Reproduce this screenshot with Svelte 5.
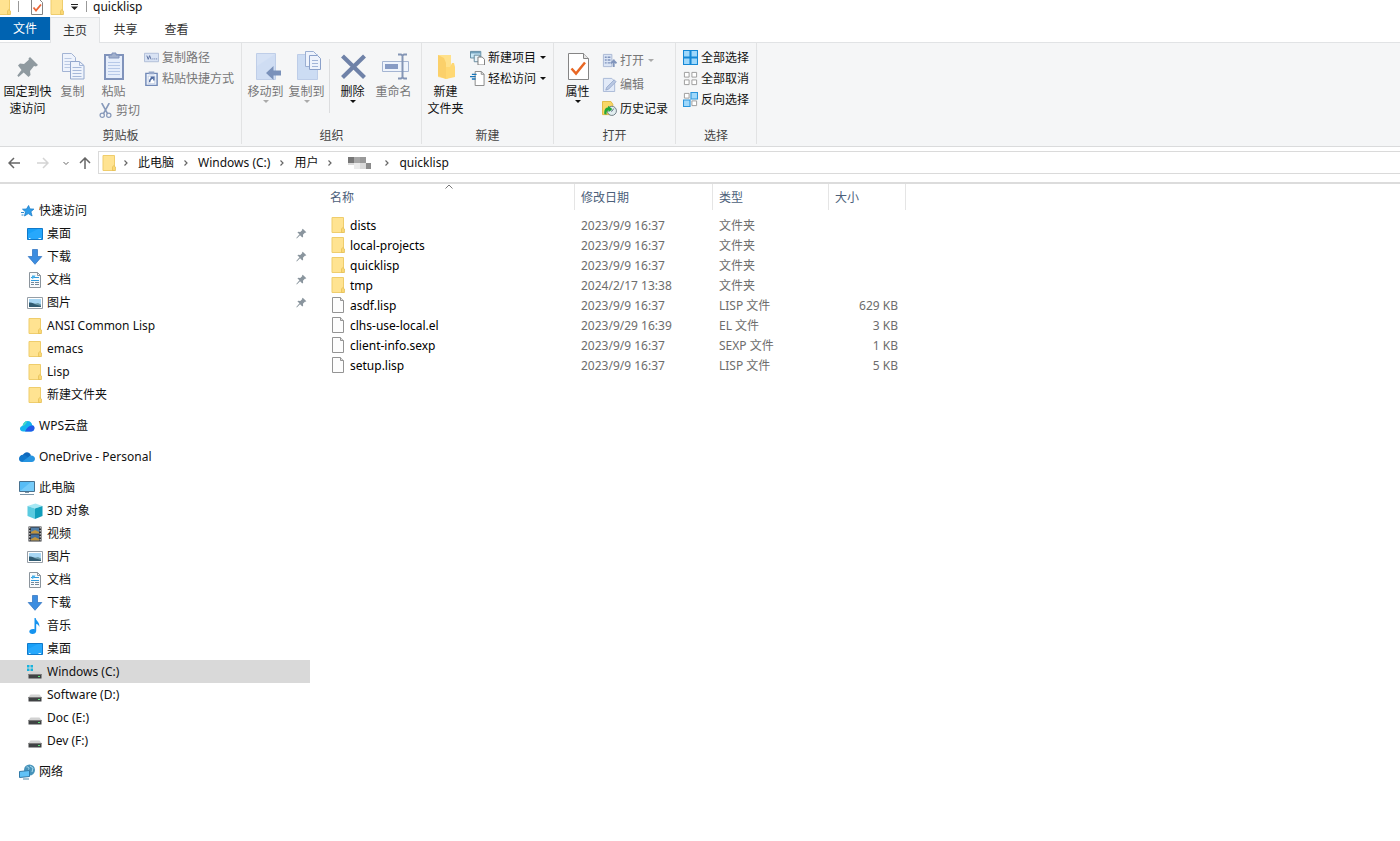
<script lang="ts">
  type NavItem = { id: string; label: string; icon: string; pinned?: boolean };
  type NavGroup = { root: NavItem; items: NavItem[] };
  type FileRow = { name: string; date: string; type: string; size: string; icon: string };

  const tabs = ['主页', '共享', '查看'];

  const crumbs = ['此电脑', 'Windows (C:)', '用户', '', 'quicklisp'];

  const nav: NavGroup[] = [
    {
      root: { id: 'quick', label: '快速访问', icon: 'star' },
      items: [
        { id: 'q-desktop', label: '桌面', icon: 'desktop', pinned: true },
        { id: 'q-download', label: '下载', icon: 'download', pinned: true },
        { id: 'q-docs', label: '文档', icon: 'document', pinned: true },
        { id: 'q-pics', label: '图片', icon: 'picture', pinned: true },
        { id: 'q-ansi', label: 'ANSI Common Lisp', icon: 'folder' },
        { id: 'q-emacs', label: 'emacs', icon: 'folder' },
        { id: 'q-lisp', label: 'Lisp', icon: 'folder' },
        { id: 'q-new', label: '新建文件夹', icon: 'folder' },
      ],
    },
    { root: { id: 'wps', label: 'WPS云盘', icon: 'wps' }, items: [] },
    { root: { id: 'onedrive', label: 'OneDrive - Personal', icon: 'onedrive' }, items: [] },
    {
      root: { id: 'pc', label: '此电脑', icon: 'pc' },
      items: [
        { id: 'pc-3d', label: '3D 对象', icon: 'cube' },
        { id: 'pc-video', label: '视频', icon: 'video' },
        { id: 'pc-pics', label: '图片', icon: 'picture' },
        { id: 'pc-docs', label: '文档', icon: 'document' },
        { id: 'pc-download', label: '下载', icon: 'download' },
        { id: 'pc-music', label: '音乐', icon: 'music' },
        { id: 'pc-desktop', label: '桌面', icon: 'desktop' },
        { id: 'c', label: 'Windows (C:)', icon: 'windrive' },
        { id: 'd', label: 'Software (D:)', icon: 'drive' },
        { id: 'e', label: 'Doc (E:)', icon: 'drive' },
        { id: 'f', label: 'Dev (F:)', icon: 'drive' },
      ],
    },
    { root: { id: 'network', label: '网络', icon: 'network' }, items: [] },
  ];

  const files: FileRow[] = [
    { name: 'dists', date: '2023/9/9 16:37', type: '文件夹', size: '', icon: 'folder' },
    { name: 'local-projects', date: '2023/9/9 16:37', type: '文件夹', size: '', icon: 'folder' },
    { name: 'quicklisp', date: '2023/9/9 16:37', type: '文件夹', size: '', icon: 'folder' },
    { name: 'tmp', date: '2024/2/17 13:38', type: '文件夹', size: '', icon: 'folder' },
    { name: 'asdf.lisp', date: '2023/9/9 16:37', type: 'LISP 文件', size: '629 KB', icon: 'file' },
    { name: 'clhs-use-local.el', date: '2023/9/29 16:39', type: 'EL 文件', size: '3 KB', icon: 'file' },
    { name: 'client-info.sexp', date: '2023/9/9 16:37', type: 'SEXP 文件', size: '1 KB', icon: 'file' },
    { name: 'setup.lisp', date: '2023/9/9 16:37', type: 'LISP 文件', size: '5 KB', icon: 'file' },
  ];

  let activeTab = $state('主页');
  let selected = $state('c');
</script>

{#snippet icon(name: string)}
  <svg class="icon" viewBox="0 0 16 16" aria-hidden="true">
    {#if name === 'folder'}
      <path d="M2 .5h11.500v15H2z" fill="#ffe391" stroke="#efcd6c" />
      <path d="M11.500 15.500V12l1.200-1.500L14.500 12v3.500z" fill="#fbd873" stroke="#e3bd54" stroke-width=".7" />
    {:else if name === 'file'}
      <path d="M2.500.5h8l3 3v12h-11z" fill="#fdfdfd" stroke="#949494" />
      <path d="M10.500.5v3h3" fill="#ddd" stroke="#949494" />
    {:else if name === 'star'}
      <path d="m9.600 2.500 1.300 3.400 4 .2-3 2.600 1.200 4.300-3.800-2.400L5.500 13l1-4.200-3-2.600 4-.2z" fill="#2f9de9" stroke="#1d7fca" stroke-width=".8" />
      <path d="M2 9.500h3M2.500 12h2" stroke="#2f8bd0" />
    {:else if name === 'desktop'}
      <path d="M.5 2.500h15v11H.5z" fill="#18a0f8" stroke="#1179c9" />
      <path d="M1 13V8L11 3h4v10z" fill="#36b0ff" opacity=".5" />
      <path d="M2 12.500h1.500m8 0H14" stroke="#d9f1ff" />
    {:else if name === 'download'}
      <path d="M5.500.5h5v7h4.300L8 15.300 1.200 7.500h4.300z" fill="#3c8de0" stroke="#2a6fbe" stroke-width=".7" />
    {:else if name === 'document'}
      <path d="M2.500.5h8l3 3v12h-11z" fill="#f7fafc" stroke="#8b949c" />
      <path d="M10.500.5v3h3" fill="none" stroke="#8b949c" />
      <path d="M4 5.500h8M4 8.500h8" stroke="#2f9bdd" />
      <path d="M5 3.500h3.500L7 6 5 7z" fill="#47aee8" />
      <path d="M4 10.500h3m1 0h4M4 12.500h3m1 0h4" stroke="#72889b" />
    {:else if name === 'picture'}
      <path d="M.5 2.500h15v11H.5z" fill="#fff" stroke="#969ea6" />
      <path d="M2 4h12v8H2z" fill="#a8d7f4" />
      <path d="M2 7.500c3-.5 5 1.500 7 1.500l5 1v2H2z" fill="#315c73" />
      <path d="m7 9 4-1 3 1.500V11z" fill="#6c9baa" />
    {:else if name === 'wps'}
      <path d="M4.500 13.500C1.800 13.500.8 12 1 10.500c.2-1.500 1.200-2.300 2.500-2.500C4 5 6 3 8.600 3c2.700 0 4.300 2 4.600 4.200 1.800.5 2.400 1.800 2.200 3.300-.2 1.800-1.500 3-3.400 3z" fill="#14b4ee" />
      <path d="M6 13.500c2-4.500 5-7 8.500-5.800.8.700 1 1.600.9 2.800-.2 1.800-1.500 3-3.400 3z" fill="#2459e8" />
      <path d="M3.500 8C4 5 6 3 8.600 3 7 5.500 6 8 3.500 8z" fill="#46d9c4" />
    {:else if name === 'onedrive'}
      <path d="M3.500 6.500C5 2.800 10 1.500 12 6.300L8 11z" fill="#0f68bb" />
      <path d="M3.500 13C1 13 0 11.500 0 9.700 0 7.500 2 5.500 4.500 5.800 7 6.100 8 8.500 11 9.500L6 13z" fill="#1177cb" />
      <path d="m3 12.700 8.500-6.200c2.500-.3 4.500 1.300 4.500 3.300 0 1.900-1.300 3.200-3.300 3.200H4z" fill="#2795e1" />
    {:else if name === 'pc'}
      <path d="M.5 1.500h15v10H.5z" fill="#57bdf7" stroke="#48718f" />
      <path d="M1 11 12 2h3v9z" fill="#8ad5fc" opacity=".6" />
      <path d="M6 12.500h4M1 14.500h14" stroke="#7b95a8" />
    {:else if name === 'cube'}
      <path d="m.5 3 8-2.500 7 2.500L8 5.500z" fill="#a6e8f4" />
      <path d="M.5 3 8 5.500V16L.5 13z" fill="#5bcbe0" />
      <path d="M8 5.500 15.500 3v10L8 16z" fill="#119ebb" />
    {:else if name === 'video'}
      <path d="M1.500.500h13v15h-13z" fill="#2f3135" />
      <path d="M4 1.500h8v6H4z" fill="#527fa8" />
      <path d="M4 8.500h8v6H4z" fill="#446f9e" />
      <path d="m4 6 4-2 4 2v1.500H4zm0 7 4-2 4 2v1.500H4z" fill="#c0943e" />
      <path d="M2.800 1v14M13.200 1v14" stroke="#eee" stroke-dasharray="1.500 1.500" />
    {:else if name === 'music'}
      <path d="M7.500 0h1.200c.2 3 4.300 4 3.600 9-.6-2-1.800-2.800-3.100-3v7c0 2-1.800 3-3.700 3S2.300 14.800 2.300 13.500c0-1.700 2.300-2.900 5.200-2.300z" fill="#1593ef" />
    {:else if name === 'drive' || name === 'windrive'}
      {#if name === 'windrive'}
        <path d="M0 1h2.500v2.500H0zm3.500 0H6v2.500H3.500zM0 4.500h2.500V7H0zm3.500 0H6V7H3.500z" fill="#17b3de" />
      {/if}
      <path d="M3.500 7.500h9l2 2.500h-13z" fill="#d2d2d2" />
      <path d="M1.500 10h13v4.500h-13z" fill="#404244" />
      <path d="M1.500 10.500h13" stroke="#777" />
      <path d="M11 12.500h2" stroke="#5be078" />
    {:else if name === 'network'}
      <circle cx="10.500" cy="6" r="5.500" fill="#4793ba" />
      <path d="M7.500 3c2-.5 3 1 2 2.500M11 2l3 2-1 4" fill="none" stroke="#a8daed" />
      <path d="m.5 7.500 10-1v6l-10 1z" fill="#60c2f7" stroke="#317aa8" />
      <path d="M4 15h6" stroke="#5187a7" />
    {:else if name === 'pin'}
      <path d="m9.500 2 4.500 4.500-1.200.7-.7-.2-2.300 2.600.2 2.400-1 1L6.200 10l-4 4-.6-.4L5.500 9 3 6.800l1-1 2.500.2L9 3.700l-.3-.8z" fill="#8a959e" />
    {:else if name === 'check'}
      <path d="M2.500.5h8l3 3v12h-11z" fill="#fff" stroke="#858585" />
      <path d="m4.500 8.500 2.500 3 5-6" fill="none" stroke="#ea6638" stroke-width="1.800" />
    {:else if name === 'path'}
      <path d="M.5 3.500h15v9H.5z" fill="#d9e3f4" stroke="#afbdd8" />
      <path d="m3 6 1.500 4L6 6l1.500 4M9 9.500h1m1 0h1m1 0h1" fill="none" stroke="#5b70a0" />
    {:else if name === 'shortcut'}
      <path d="M2 2.500h12v13H2z" fill="#edf3fc" stroke="#7188b6" stroke-width="1.500" />
      <path d="M5 .5h6v3H5z" fill="#96a7c9" />
      <path d="M4.500 5.500h7v8h-7z" fill="#fff" stroke="#b4c1da" stroke-width=".7" />
      <path d="M6 12c0-3 1-4 3.500-4.500M7 6.500h3.500V10" fill="none" stroke="#4c689f" stroke-width="1.500" />
    {:else if name === 'cut'}
      <path d="M4 0 10 11M12 0 6 11" stroke="#8799ba" stroke-width="1.700" />
      <circle cx="4.500" cy="13" r="2.300" fill="none" stroke="#8799ba" stroke-width="1.300" />
      <circle cx="11.500" cy="13" r="2.300" fill="none" stroke="#8799ba" stroke-width="1.300" />
    {:else if name === 'newitem'}
      <path d="M.5 1.500h11v7H.5z" fill="#c9e8f7" stroke="#5d88a0" />
      <path d="M1 3h10" stroke="#41799c" />
      <path d="M4.500 5.500h6v7h-6z" fill="#e8f4fa" stroke="#63869b" />
      <path d="M8.500 7.500h4.500l2.500 2.500v6h-7z" fill="#fff" stroke="#777" />
    {:else if name === 'easy'}
      <path d="M5.500.5h6.500l3 3v12H5.500z" fill="#fff" stroke="#858585" />
      <path d="M12 .5v3h3" fill="none" stroke="#858585" />
      <path d="M2 3.500h5M0 6h6M2 8.500h4" stroke="#1976b9" stroke-width="1.400" />
    {:else if name === 'open'}
      <path d="M1.500 1.500h9v13h-9z" fill="#dbe5f5" stroke="#a9b8d3" />
      <path d="M3 4.500h2m1 0h3M3 7.500h2m1 0h3M3 10.500h2m1 0h3" stroke="#8094bd" stroke-width="1.500" />
      <path d="M12.500 7v8M9.500 11l3-3 3 3" fill="none" stroke="#8296bd" stroke-width="2" />
    {:else if name === 'edit'}
      <path d="M1.500 1.500h9l3 3v11h-12z" fill="#e2eaf8" stroke="#a8b8d5" />
      <path d="m4 14 1-3 8-8 2 2-8 8z" fill="#b9c8e2" stroke="#91a4c9" stroke-width=".8" />
    {:else if name === 'history'}
      <path d="M.5.5h9l2 3v11H.5z" fill="#f9d766" stroke="#e0b83e" />
      <circle cx="10.500" cy="10.500" r="4.900" fill="#e2edf0" stroke="#6c7b82" />
      <path d="m12.500 8-2 3-1.500-1" fill="none" stroke="#5c7380" />
      <path d="M2.500 14C2 9 4 7 6.500 7V5L11 8.500 7 12v-2c-2 0-2.500 2-2 4.500z" fill="#22a838" />
    {:else if name === 'selall'}
      <path d="M.5.5h7v7h-7zm8 0h7v7h-7zm-8 8h7v7h-7zm8 0h7v7h-7z" fill="#9fd8fb" stroke="#1588d6" stroke-width="1.200" />
    {:else if name === 'selnone'}
      <path d="M1.500 1.500h5v5h-5zm8 0h5v5h-5zm-8 8h5v5h-5zm8 0h5v5h-5z" fill="#fff" stroke="#9a9a9a" />
    {:else if name === 'invert'}
      <path d="M1.500 1.500h5v5h-5zm8 8h5v5h-5z" fill="#fff" stroke="#9a9a9a" />
      <path d="M8.500.5h7v7h-7zm-8 8h7v7h-7z" fill="#9fd8fb" stroke="#2a95dc" stroke-width="1.200" />
    {/if}
  </svg>
{/snippet}

{#snippet bigIcon(name: string)}
  <svg class="big-icon" viewBox="0 0 32 32" aria-hidden="true">
    {#if name === 'pin'}
      <path d="m18 6 8 8-2 1.500-2-.5-4 5 .5 4-2 2-4.800-4.500L6.500 26 5.300 24.500 9.500 19 6 14.500 8 12.500l4 .5 4.800-4.300L16.500 7.500z" fill="#8f9aa0" />
    {:else if name === 'copy'}
      <path d="M5.500 2.500h9l4 4v14h-13z" fill="#eef3fc" stroke="#a3b4d4" />
      <path d="M7.500 7.500h7m-7 3h9m-9 3h9m-9 3h9" stroke="#bac9e3" />
      <path d="M13.500 10.500h9l4.500 4v13.500H13.500z" fill="#eef3fc" stroke="#93a7cd" />
      <path d="M22.500 10.500v4H27M15.500 16.500h9m-9 3h9m-9 3h9m-9 3h9" fill="none" stroke="#a6b8d9" />
    {:else if name === 'paste'}
      <path d="M7 4h18v24H7z" fill="#e6eefb" stroke="#8093bb" stroke-width="2" />
      <path d="M11 7V4h3V2h4v2h3v3z" fill="#a2b1cd" stroke="#8093bb" />
      <path d="M10 11.500h12m-12 3h12m-12 3h12m-12 3h12m-12 3h12" stroke="#b7c9e8" />
    {:else if name === 'move'}
      <path d="M6.500 2.500h19v26h-19z" fill="#d6e2f5" stroke="#bfcee8" />
      <path d="M7 28V15L25 3v25z" fill="#c9daf2" opacity=".6" />
      <path d="m16 22 7.500-7v4.500H31v5h-7.500V29z" fill="#7a91ba" />
    {:else if name === 'copyto'}
      <path d="M6.500 3.500h20v25h-20z" fill="#ccdcf3" stroke="#bdcde8" />
      <path d="M14.500.5h8l3 3v12h-11z" fill="#eef3fc" stroke="#9bafd2" />
      <path d="M18.500 4.500h8l3 3v11h-11z" fill="#eef3fc" stroke="#8ba1ca" />
      <path d="M21 9.500h6m-6 3h6m-6 3h6" stroke="#a2b5d8" />
    {:else if name === 'delete'}
      <path d="m5.500 5 22 21.500M27.500 5 5.500 26.500" stroke="#6f82a8" stroke-width="4.200" />
    {:else if name === 'rename'}
      <path d="M4.500 10.500h26v10h-26z" fill="#eff4fc" stroke="#a5b5d2" />
      <path d="M7 13h13v5H7z" fill="#879bc4" />
      <path d="M24.500 4v23M20 3.500h3l1.500 1 1.500-1h3M20 27.500h3l1.500-1 1.500 1h3" fill="none" stroke="#8495b5" stroke-width="2" />
    {:else if name === 'newfolder'}
      <path d="M8 4h13v21l-4 3-9-2z" fill="#ffe18b" />
      <path d="m8 4 6 3 2 5v16l-8-3z" fill="#fbd06a" />
      <path d="M16 16h4l2-4h2l1 4v10l-9 2z" fill="#ffd873" />
    {:else if name === 'properties'}
      <path d="M6.500 2.500h15l5 5v21h-20z" fill="#fff" stroke="#858585" />
      <path d="M21.500 2.500v5h5" fill="#e5e5e5" stroke="#858585" />
      <path d="m9.500 17.500 4.500 5 9-11" fill="none" stroke="#e86724" stroke-width="2.500" />
    {/if}
  </svg>
{/snippet}

{#snippet caret()}
  <svg class="caret" viewBox="0 0 6 3" aria-hidden="true"><path d="M0 0h6L3 3z" fill="currentColor" /></svg>
{/snippet}

{#snippet chevron()}
  <svg class="chevron" viewBox="0 0 6 8" aria-hidden="true">
    <path d="m1.500 1.500 2.500 2.500-2.500 2.500" fill="none" stroke="#666" stroke-width="1.200" />
  </svg>
{/snippet}

{#snippet big(name: string, label: string, opts: { off?: boolean; menu?: boolean; wide?: boolean } = {})}
  <button type="button" class="big-btn" class:wide={opts.wide} disabled={opts.off}>
    {@render bigIcon(name)}
    <span class="big-label">{label}</span>
    {#if opts.menu}{@render caret()}{/if}
  </button>
{/snippet}

{#snippet small(name: string, label: string, opts: { off?: boolean; menu?: boolean } = {})}
  <button type="button" class="small-btn" disabled={opts.off}>
    {@render icon(name)}
    <span>{label}</span>
    {#if opts.menu}{@render caret()}{/if}
  </button>
{/snippet}

<div class="explorer">
  <header class="titlebar">
    {@render icon('folder')}
    <span class="bar"></span>
    <button type="button" class="quick-btn" aria-label="属性">{@render icon('check')}</button>
    <button type="button" class="quick-btn" aria-label="新建文件夹">{@render icon('folder')}</button>
    <button type="button" class="quick-menu" aria-label="自定义快速访问工具栏">
      <svg viewBox="0 0 7 6" aria-hidden="true"><path d="M0 0h7v1H0zM0 2.500h7l-3.500 3.500z" fill="#222" /></svg>
    </button>
    <span class="bar"></span>
    <h1 class="title">quicklisp</h1>
  </header>

  <nav class="tabs">
    <button type="button" class="tab file-tab">文件</button>
    {#each tabs as tab}
      <button type="button" class="tab" class:active={activeTab === tab} onclick={() => (activeTab = tab)}>{tab}</button>
    {/each}
  </nav>

  <div class="ribbon">
    <section class="group">
      <div class="group-body clipboard">
        {@render big('pin', '固定到快速访问', { wide: true })}
        {@render big('copy', '复制', { off: true })}
        <div class="paste-stack">
          {@render big('paste', '粘贴', { off: true })}
          {@render small('cut', '剪切', { off: true })}
        </div>
        <div class="stack">
          {@render small('path', '复制路径', { off: true })}
          {@render small('shortcut', '粘贴快捷方式', { off: true })}
        </div>
      </div>
      <h2 class="group-label">剪贴板</h2>
    </section>

    <section class="group">
      <div class="group-body">
        {@render big('move', '移动到', { off: true, menu: true })}
        {@render big('copyto', '复制到', { off: true, menu: true })}
        <span class="divider"></span>
        {@render big('delete', '删除', { menu: true })}
        {@render big('rename', '重命名', { off: true })}
      </div>
      <h2 class="group-label">组织</h2>
    </section>

    <section class="group">
      <div class="group-body">
        {@render big('newfolder', '新建\n文件夹')}
        <div class="stack">
          {@render small('newitem', '新建项目', { menu: true })}
          {@render small('easy', '轻松访问', { menu: true })}
        </div>
      </div>
      <h2 class="group-label">新建</h2>
    </section>

    <section class="group">
      <div class="group-body">
        {@render big('properties', '属性', { menu: true })}
        <div class="stack roomy">
          {@render small('open', '打开', { off: true, menu: true })}
          {@render small('edit', '编辑', { off: true })}
          {@render small('history', '历史记录')}
        </div>
      </div>
      <h2 class="group-label">打开</h2>
    </section>

    <section class="group">
      <div class="group-body">
        <div class="stack">
          {@render small('selall', '全部选择')}
          {@render small('selnone', '全部取消')}
          {@render small('invert', '反向选择')}
        </div>
      </div>
      <h2 class="group-label">选择</h2>
    </section>
  </div>

  <div class="address-row">
    <button type="button" class="nav-btn" aria-label="后退">
      <svg viewBox="0 0 12 12" aria-hidden="true"><path d="M12 6H1m5-5L1 6l5 5" /></svg>
    </button>
    <button type="button" class="nav-btn" aria-label="前进" disabled>
      <svg viewBox="0 0 12 12" aria-hidden="true"><path d="M0 6h11M6 1l5 5-5 5" /></svg>
    </button>
    <button type="button" class="nav-btn recent" aria-label="最近浏览的位置">
      <svg viewBox="0 0 6 6" aria-hidden="true"><path d="m.5 2 2.500 2.500L5.500 2" /></svg>
    </button>
    <button type="button" class="nav-btn up" aria-label="上移">
      <svg viewBox="0 0 12 12" aria-hidden="true"><path d="M6 12V1M1 6l5-5 5 5" /></svg>
    </button>
    <div class="address">
      {@render icon('folder')}
      {#each crumbs as crumb}
        {@render chevron()}
        {#if crumb}
          <a class="crumb" href="#{crumb}">{crumb}</a>
        {:else}
          <svg class="masked" viewBox="0 0 24 12" aria-hidden="true">
            <path d="M0 0h6v6H0z" fill="#777" />
            <path d="M6 0h6v6H6z" fill="#a6a6a6" />
            <path d="M12 0h6v6h-6z" fill="#999" />
            <path d="M0 6h6v2H0zM12 6h6v6h-6z" fill="#d9d9d9" />
            <path d="M6 6h6v6H6z" fill="#ebebeb" />
            <path d="M18 6h5v6h-5z" fill="#8b8b8b" />
          </svg>
        {/if}
      {/each}
    </div>
  </div>

  <div class="main">
    <nav class="sidebar">
      {#each nav as group}
        <ul class="nav-group">
          {#each [group.root, ...group.items] as item, i}
            <li>
              <a
                href="#{item.id}"
                class="nav-item"
                class:child={i > 0}
                class:selected={selected === item.id}
                onclick={() => (selected = item.id)}
              >
                {@render icon(item.icon)}
                <span class="nav-label">{item.label}</span>
                {#if item.pinned}<span class="pinned">{@render icon('pin')}</span>{/if}
              </a>
            </li>
          {/each}
        </ul>
      {/each}
    </nav>

    <div class="content">
      <table class="files">
        <thead>
          <tr>
            <th class="col-name" aria-sort="ascending">
              名称
              <svg class="sort" viewBox="0 0 8 5" aria-hidden="true"><path d="m.5 4.500 3.500-3.500 3.500 3.500" /></svg>
            </th>
            <th class="col-date">修改日期</th>
            <th class="col-type">类型</th>
            <th class="col-size">大小</th>
          </tr>
        </thead>
        <tbody>
          {#each files as file}
            <tr>
              <td class="name"><span class="file-name">{@render icon(file.icon)}{file.name}</span></td>
              <td>{file.date}</td>
              <td>{file.type}</td>
              <td class="size">{file.size}</td>
            </tr>
          {/each}
        </tbody>
      </table>
    </div>
  </div>
</div>

<style>
  :global(body) {
    margin: 0;
    background: #fff;
  }

  .explorer {
    min-height: 100vh;
    display: flex;
    flex-direction: column;
    font-family: 'Noto Sans', 'Noto Sans CJK SC', sans-serif;
    font-size: 12px;
    line-height: 17px;
    color: #111;
  }

  button {
    font: inherit;
    color: inherit;
    background: none;
    border: none;
    padding: 0;
    margin: 0;
  }

  button:disabled {
    color: #777;
  }

  a {
    color: inherit;
    text-decoration: none;
  }

  .icon {
    width: 16px;
    height: 16px;
    flex: none;
    display: block;
  }

  .caret {
    width: 6px;
    height: 3px;
    flex: none;
  }

  button:disabled .caret {
    color: #aaa;
  }

  /* Title bar */
  .titlebar {
    display: flex;
    align-items: center;
    height: 13px;
    padding-bottom: 4px;
    margin-left: -4px;
  }

  .bar {
    width: 1px;
    height: 11px;
    margin: 0 6px;
    background: #999;
  }

  .quick-btn {
    margin-left: 4px;
  }

  .quick-menu {
    display: flex;
    margin: 0 2px 0 6px;
  }

  .quick-menu svg {
    width: 7px;
    height: 6px;
  }

  .title {
    margin: 0;
    font-size: 12px;
    line-height: 15px;
    font-weight: 400;
  }

  /* Tabs */
  .tabs {
    display: flex;
    height: 25px;
    border-bottom: 1px solid #e1e3e5;
  }

  .tab {
    box-sizing: border-box;
    width: 51px;
    height: 25px;
    color: #333;
  }

  .file-tab {
    width: 50px;
    height: 23px;
    background: #0063b1;
    color: #fff;
  }

  .tab.active {
    width: 50px;
    height: 26px;
    background: #f5f6f7;
    border: 1px solid #e1e3e5;
    border-bottom: none;
  }

  /* Ribbon */
  .ribbon {
    display: flex;
    background: #f5f6f7;
    border-bottom: 1px solid #dadbdc;
  }

  .group {
    display: flex;
    flex-direction: column;
    padding-top: 4px;
    margin-bottom: 2px;
    border-right: 1px solid #e2e3e4;
  }

  .group-body {
    display: flex;
    align-items: flex-start;
    height: 80px;
    padding: 0 7px 0 3px;
  }

  .group-body.clipboard {
    padding-left: 0;
  }

  .group-label {
    margin: 0;
    font-size: 12px;
    font-weight: 400;
    text-align: center;
    color: #444;
  }

  .big-btn {
    display: flex;
    flex-direction: column;
    align-items: center;
    width: 41px;
    padding-top: 4px;
  }

  .big-btn.wide {
    width: 52px;
    padding-left: 3px;
  }

  .big-label {
    white-space: pre-line;
  }

  .big-icon {
    width: 32px;
    height: 32px;
  }

  .paste-stack {
    display: flex;
    flex-direction: column;
  }

  .paste-stack .small-btn {
    padding-left: 5px;
  }

  .stack {
    display: flex;
    flex-direction: column;
    align-items: flex-start;
    margin-left: 4px;
  }

  .small-btn {
    display: flex;
    align-items: center;
    gap: 3px;
    height: 21px;
    white-space: nowrap;
  }

  .small-btn .icon {
    width: 15px;
    height: 15px;
  }

  .small-btn .caret {
    margin-left: 1px;
  }

  .roomy {
    padding-top: 1px;
  }

  .roomy .small-btn {
    height: 24px;
  }

  .divider {
    width: 1px;
    height: 54px;
    margin: 12px 2px 0;
    background: #dcdddf;
  }

  /* Address bar */
  .address-row {
    display: flex;
    align-items: center;
    height: 31px;
    padding: 0 0 4px 8px;
    border-bottom: 2px solid #dcdcdc;
  }

  .nav-btn {
    display: flex;
    margin-right: 17px;
  }

  .nav-btn svg {
    width: 12px;
    height: 12px;
    fill: none;
    stroke: #666;
    stroke-width: 1.5;
  }

  .nav-btn:disabled svg {
    stroke: #d4d4d4;
  }

  .nav-btn.recent {
    margin-right: 10px;
    margin-left: -3px;
  }

  .nav-btn.recent svg {
    width: 6px;
    height: 6px;
    stroke-width: 1;
  }

  .nav-btn.up {
    margin-right: 7px;
  }

  .address {
    flex: 1;
    display: flex;
    align-items: center;
    height: 21px;
    padding-left: 2px;
    border: 1px solid #dadada;
    border-right: none;
  }

  .chevron {
    width: 6px;
    height: 8px;
    flex: none;
    margin: 0 9px;
  }

  .address .icon + .chevron {
    margin-left: 6px;
  }

  .masked {
    width: 24px;
    height: 12px;
    margin: 0 3px 0 6px;
  }

  /* Navigation pane */
  .main {
    flex: 1;
    display: flex;
  }

  .sidebar {
    flex: none;
    width: 310px;
    padding-top: 15px;
  }

  .nav-group {
    list-style: none;
    margin: 0 0 8px;
    padding: 0;
  }

  .nav-item {
    display: flex;
    align-items: center;
    gap: 4px;
    height: 23px;
    padding: 0 0 0 19px;
  }

  .nav-item.child {
    padding-left: 27px;
  }

  .nav-item.selected {
    background: #d9d9d9;
  }

  .nav-label {
    flex: 1;
  }

  .pinned .icon {
    width: 13px;
    height: 13px;
    margin-right: 2px;
  }

  /* File list */
  .content {
    flex: 1;
    padding-left: 14px;
  }

  .files {
    width: 582px;
    table-layout: fixed;
    border-collapse: separate;
    border-spacing: 0;
    color: #6d6d6d;
  }

  th {
    box-sizing: border-box;
    height: 26px;
    padding: 0 6px;
    border-right: 1px solid #e5e5e5;
    font-weight: 400;
    text-align: left;
    color: #4c607a;
  }

  thead::after {
    content: '';
    display: block;
    height: 5px;
  }

  .col-name {
    position: relative;
    width: 251px;
  }

  .col-date {
    width: 138px;
  }

  .col-type {
    width: 116px;
  }

  .sort {
    position: absolute;
    top: 0;
    left: 50%;
    width: 8px;
    height: 5px;
    margin-left: -4px;
    fill: none;
    stroke: #777;
  }

  td {
    height: 20px;
    padding: 0 8px 0 6px;
  }

  td.name {
    color: #000;
  }

  td.size {
    text-align: right;
  }

  .file-name {
    display: flex;
    align-items: center;
    gap: 4px;
  }
</style>
